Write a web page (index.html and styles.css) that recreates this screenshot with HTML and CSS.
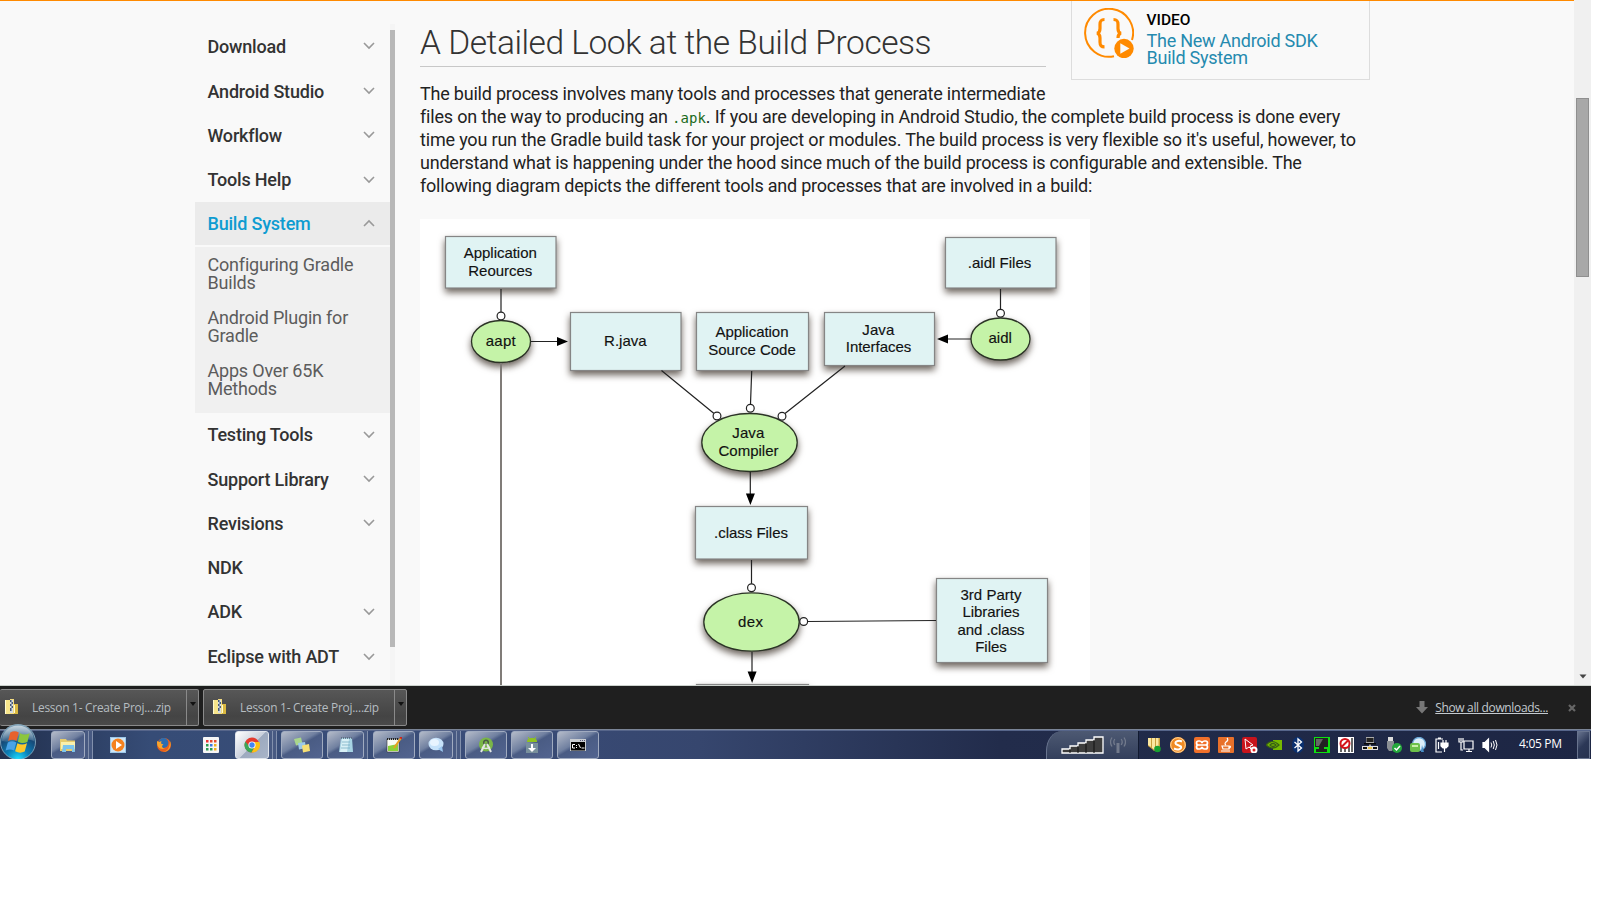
FILE: index.html
```html
<!DOCTYPE html>
<html lang="en">
<head>
<meta charset="utf-8">
<title>Build System Overview</title>
<link rel="stylesheet" href="styles.css">
</head>
<body>
<div class="screen">
  <div class="browser">
    <nav class="side">
      <ul class="menu">
        <li class="item first">Download<svg class="chev" viewBox="0 0 12 8"><path d="M1 1l5 5 5-5"/></svg></li>
        <li class="item">Android Studio<svg class="chev" viewBox="0 0 12 8"><path d="M1 1l5 5 5-5"/></svg></li>
        <li class="item">Workflow<svg class="chev" viewBox="0 0 12 8"><path d="M1 1l5 5 5-5"/></svg></li>
        <li class="item">Tools Help<svg class="chev" viewBox="0 0 12 8"><path d="M1 1l5 5 5-5"/></svg></li>
        <li class="item active">Build System<svg class="chev" viewBox="0 0 12 8"><path d="M1 7l5-5 5 5"/></svg></li>
        <li class="submenu">
          <a>Configuring Gradle<br>Builds</a>
          <a>Android Plugin for<br>Gradle</a>
          <a>Apps Over 65K<br>Methods</a>
        </li>
        <li class="item">Testing Tools<svg class="chev" viewBox="0 0 12 8"><path d="M1 1l5 5 5-5"/></svg></li>
        <li class="item">Support Library<svg class="chev" viewBox="0 0 12 8"><path d="M1 1l5 5 5-5"/></svg></li>
        <li class="item">Revisions<svg class="chev" viewBox="0 0 12 8"><path d="M1 1l5 5 5-5"/></svg></li>
        <li class="item">NDK</li>
        <li class="item">ADK<svg class="chev" viewBox="0 0 12 8"><path d="M1 1l5 5 5-5"/></svg></li>
        <li class="item last">Eclipse with ADT<svg class="chev" viewBox="0 0 12 8"><path d="M1 1l5 5 5-5"/></svg></li>
      </ul>
      <div class="side-track"><div class="side-thumb"></div></div>
    </nav>
    <main class="content">
      <div class="top">
        <h1>A Detailed Look at the Build Process</h1>
        <aside class="video">
          <svg class="video-icon" viewBox="0 0 50 50" fill="none" stroke="#ff8a00">
            <path d="M30 48.300A24 24 0 1 1 48 32" stroke-width="2"/>
            <path d="M20.500 11.500c-4 0-4.500 2-4.500 5v4c0 2.500-.7 4.200-3 4.700 2.300.5 3 2.200 3 4.700v4c0 3 .5 5 4.500 5M29.500 11.500c4 0 4.500 2 4.500 5v4c0 2.500.7 4.200 3 4.700-2.300.5-3 2.200-3 4.700" stroke-width="3.200"/>
            <circle cx="40" cy="40.500" r="9.700" fill="#ff8a00" stroke="none"/>
            <path d="M36.300 35.300l9.200 5.200-9.200 5.200z" fill="#f9f9f9" stroke="none"/>
          </svg>
          <div class="video-text"><b>VIDEO</b><a>The New Android SDK<br>Build System</a></div>
        </aside>
      </div>
      <p class="para"><span class="l1">The build process involves many tools and processes that generate intermediate</span><br><span class="l2">files on the way to producing an <code>.apk</code>. If you are developing in Android Studio, the complete build process is done every</span><br><span class="l3">time you run the Gradle build task for your project or modules. The build process is very flexible so it's useful, however, to</span><br><span class="l4">understand what is happening under the hood since much of the build process is configurable and extensible. The</span><br><span class="l5">following diagram depicts the different tools and processes that are involved in a build:</span></p>
      <svg class="diagram" viewBox="420 219 670 466">
        <defs>
          <filter id="sh" x="-20%" y="-30%" width="140%" height="180%" color-interpolation-filters="sRGB"><feDropShadow dx="0" dy="4" stdDeviation="3.500" flood-color="#3c3228" flood-opacity=".75"/></filter>
        </defs>
        <rect x="420" y="219" width="670" height="466" fill="#fff"/>
        <g class="box" filter="url(#sh)">
          <rect x="445.500" y="236.500" width="110.500" height="51.500"/>
          <rect x="570.500" y="312.500" width="110.500" height="58"/>
          <rect x="696.500" y="312.500" width="112" height="58"/>
          <rect x="824.500" y="312.500" width="110" height="53"/>
          <rect x="945.500" y="237.500" width="110.500" height="50.500"/>
          <rect x="695.500" y="506.500" width="112" height="52.500"/>
          <rect x="936.500" y="578.500" width="111" height="84"/>
          <rect x="696.500" y="684.500" width="112" height="50"/>
        </g>
        <g class="oval" filter="url(#sh)">
          <ellipse cx="501" cy="341.500" rx="29.500" ry="21"/>
          <ellipse cx="1000.500" cy="339" rx="29.500" ry="21"/>
          <ellipse cx="749.500" cy="442.500" rx="47.700" ry="29"/>
          <ellipse cx="751.500" cy="622" rx="47.700" ry="29.200"/>
        </g>
        <path class="trunk" d="M501 363V685"/>
        <path class="wire" d="M501 289v23M1000.500 289v20M531 341.500h28M971 339h-25M661.500 370.500l52.500 43M751.700 371l-1.200 33M845 366l-60 47.500M750.300 472v24M751.500 560v24M808 621.500l128-1M752 652v22"/>
        <path d="M557 337l11 4.500-11 4.500zM948 334.500l-11 4.500 11 4.500zM745.900 493.500h9l-4.500 11.500zM747.600 671.500h9l-4.500 11.500z"/>
        <g class="dot">
          <circle cx="501" cy="316" r="3.900"/><circle cx="1000.500" cy="313.300" r="3.900"/>
          <circle cx="717" cy="416" r="3.900"/><circle cx="750.300" cy="408.300" r="3.900"/><circle cx="782" cy="416.300" r="3.900"/>
          <circle cx="751.500" cy="587.700" r="3.900"/><circle cx="803.700" cy="621.500" r="3.900"/>
        </g>
        <g class="label">
          <text x="500.300" y="258.300" textLength="73">Application</text><text x="500.300" y="275.800" textLength="64">Reources</text>
          <text x="500.700" y="346" textLength="30">aapt</text>
          <text x="625.300" y="346" textLength="42.500">R.java</text>
          <text x="752" y="337" textLength="73">Application</text><text x="752" y="354.500" textLength="87.500">Source Code</text>
          <text x="878.300" y="334.700" textLength="32">Java</text><text x="878.500" y="352" textLength="65.500">Interfaces</text>
          <text x="999.500" y="268" textLength="63.500">.aidl Files</text>
          <text x="1000.200" y="343.300" textLength="23.500">aidl</text>
          <text x="748.300" y="438.300" textLength="32">Java</text><text x="748.500" y="455.700" textLength="60">Compiler</text>
          <text x="751" y="538" textLength="74">.class Files</text>
          <text x="750.500" y="627" textLength="25">dex</text>
          <text x="991" y="599.700" textLength="61">3rd Party</text><text x="991" y="617.200" textLength="57">Libraries</text><text x="991" y="634.500" textLength="67">and .class</text><text x="991" y="651.900" textLength="31.500">Files</text>
        </g>
      </svg>
    </main>
    <div class="scrollbar"><div class="thumb"></div><svg class="sb-arrow" viewBox="0 0 8 5"><path d="M.5.5h7L4 4.500z" fill="#444"/></svg></div>
  </div>

  <div class="downloads">
    <div class="dl first"><svg class="zip" viewBox="0 0 15 16"><path d="M1 1h5v14H1z" fill="#f7e58a"/><path d="M9 5h5v10H9z" fill="#d9b840"/><path d="M10 6h1v8h-1zM1 1h1v14H1z" fill="#fffbd0"/><path d="M6 0h4v15H6z" fill="#f3dc80"/><path d="M6 1h3v13H6z" fill="#d4dae2"/><path d="M6 1h1.500v2H6zM7.500 3H9v2H7.500zM6 5h1.500v2H6zM7.500 7H9v2H7.500zM6 9h1.500v3H6z" fill="#42597a"/></svg><span class="dl-name">Lesson 1- Create Proj....zip</span><span class="drop"><svg viewBox="0 0 6 4"><path d="M0 0h6L3 4z" fill="#111"/></svg></span></div>
    <div class="dl second"><svg class="zip" viewBox="0 0 15 16"><path d="M1 1h5v14H1z" fill="#f7e58a"/><path d="M9 5h5v10H9z" fill="#d9b840"/><path d="M10 6h1v8h-1zM1 1h1v14H1z" fill="#fffbd0"/><path d="M6 0h4v15H6z" fill="#f3dc80"/><path d="M6 1h3v13H6z" fill="#d4dae2"/><path d="M6 1h1.500v2H6zM7.500 3H9v2H7.500zM6 5h1.500v2H6zM7.500 7H9v2H7.500zM6 9h1.500v3H6z" fill="#42597a"/></svg><span class="dl-name">Lesson 1- Create Proj....zip</span><span class="drop"><svg viewBox="0 0 6 4"><path d="M0 0h6L3 4z" fill="#111"/></svg></span></div>
    <svg class="dl-arrow" viewBox="0 0 12 13"><path d="M3.500 0h5v6H12l-6 6.500L0 6h3.500z" fill="#777"/></svg>
    <a class="show-all">Show all downloads...</a>
    <svg class="dl-close" viewBox="0 0 8 8"><path d="M1 1l6 6M7 1L1 7" stroke="#666" stroke-width="2.200"/></svg>
  </div>

  <div class="taskbar">
    <svg class="start" viewBox="0 0 36 36">
      <defs>
        <radialGradient id="orb" cx=".5" cy="1" r=".95"><stop offset="0" stop-color="#1fe0ff"/><stop offset=".35" stop-color="#0b7fb8"/><stop offset=".7" stop-color="#174a78"/><stop offset="1" stop-color="#6d93ac"/></radialGradient>
        <linearGradient id="gloss" x1="0" y1="0" x2="0" y2="1"><stop offset="0" stop-color="#fff" stop-opacity=".6"/><stop offset="1" stop-color="#fff" stop-opacity=".12"/></linearGradient>
      </defs>
      <circle cx="18" cy="18" r="17.500" fill="url(#orb)" stroke="#8fb4c8" stroke-width=".8"/>
      <path d="M2 17C2 8 9 1.500 18 1.500S34 8 34 17c-9-4-22 3-32 0z" fill="url(#gloss)"/>
      <path d="M10.300 8.500c3-1.600 5.500-1.600 8.500 0l-2.200 8.500c-3-1.600-5.500-1.400-8.500 0z" fill="#e8622c"/>
      <path d="M20 9.300c3.400 1.700 6.200 1.600 9.700 0l-2.300 8.700c-3.600 1.600-6.200 1.400-9.600-.3z" fill="#8cc63c"/>
      <path d="M7.800 18.400c3-1.600 5.500-1.600 8.500 0l-2.200 8.200c-3-1.600-5.500-1.500-8.500 0z" fill="#4aa3e8"/>
      <path d="M17.400 19.200c3.400 1.700 6.100 1.600 9.600 0l-2.300 8.300c-3.400 1.600-6.200 1.500-9.600-.3z" fill="#fcc82c"/>
    </svg>
    <div class="apps">
      <span class="tb w34"><svg viewBox="0 0 16 16"><path d="M0 2h6l1 1.500h8V14H0z" fill="#e6cc6c"/><path d="M1 5h14v7H1z" fill="#faf0ac"/><path d="M3 8h11l1 7h-3v-3H6v3H2z" fill="#7cc4ec"/></svg></span><i class="stack"></i><i class="stack"></i>
      <span class="pin p1"><svg viewBox="0 0 16 16"><path d="M0 0h16v16H0z" fill="#9cc8ea"/><path d="M1 1h14v14H1z" fill="#cfe6f6"/><circle cx="8" cy="8" r="6.500" fill="#f5821f"/><path d="M6 4l6 4-6 4z" fill="#fff"/></svg></span>
      <span class="pin p2"><svg viewBox="0 0 16 16"><circle cx="8" cy="8" r="7" fill="#e8601c"/><circle cx="7.500" cy="6" r="4.900" fill="#2c6db0"/><path d="M1 4c-.5 7 4 9 8 7.500C6 11 5 9 7.500 7.500L5 6.500 5.500 4 3 5zM14 4c2 5-1 11-7 11 5-1 7-5 7-11z" fill="#f9a52c"/></svg></span>
      <span class="pin p3"><svg viewBox="0 0 16 16"><rect width="16" height="16" rx="1" fill="#f6f6f6"/><path d="M3 3h2.500v2.500H3z" fill="#e33"/><path d="M7 3h2.500v2.500H7zM11 3h2.500v2.500H11z" fill="#e34b30"/><path d="M3 7h2.500v2.500H3z" fill="#2a9a50"/><path d="M7 7h2.500v2.500H7z" fill="#3a78e0"/><path d="M11 7h2.500v2.500H11z" fill="#f0b020"/><path d="M3 11h2.500v2.500H3zM7 11h2.500v2.500H7z" fill="#2a9a50"/><path d="M11 11h2.500v2.500H11z" fill="#f0b020"/></svg></span>
      <span class="tb w34 lit"><svg viewBox="0 0 16 16"><circle cx="8" cy="8" r="7.500" fill="#e33b2e"/><path d="M1.300 4.500A7.500 7.500 0 0 0 7.500 15.500L10.500 10 5 9z" fill="#3aa757"/><path d="M15.300 5A7.500 7.500 0 0 1 7.500 15.500L11 9.500 9.500 5z" fill="#fbc116"/><circle cx="8" cy="8" r="3.600" fill="#fff"/><circle cx="8" cy="8" r="2.700" fill="#4285f4"/></svg></span><i class="stack"></i><i class="stack"></i>
      <span class="tb w42 m4"><svg viewBox="0 0 16 16"><path d="M0 2l7-1.500L8.500 7 2 8.500z" fill="#a9d68c"/><path d="M4 6l7-1 1 6-7 1.500z" fill="#9cc9e8"/><path d="M8 8.500l7-1.500 1 7-7 1.500z" fill="#f6df74"/></svg></span>
      <span class="tb w37 m4"><svg viewBox="0 0 16 16"><path d="M3 1h11l1 14H1z" fill="#a8d4e4"/><path d="M4 2h7L9 15H2z" fill="#d8f0f6"/><path d="M3 1h11" stroke="#567" stroke-width="1.500" stroke-dasharray="1 1"/><path d="M4 5h8M4 8h8M3 11h9" stroke="#6fa7bd" stroke-width=".7"/></svg></span><i class="stack"></i>
      <span class="tb w42 m5"><svg viewBox="0 0 16 16"><path d="M1 2h12v13H1z" fill="#f8fbf4" stroke="#333" stroke-width=".6"/><path d="M2 9l10-2v7H2z" fill="#8bd138"/><path d="M1 2h12" stroke="#222" stroke-width="2" stroke-dasharray="1 1"/><path d="M15 1L8 11" stroke="#e8a020" stroke-width="2"/><path d="M14 0l2 1.500" stroke="#c22" stroke-width="2"/></svg></span>
      <span class="tb w34 m4"><svg viewBox="0 0 16 16"><ellipse cx="8" cy="7" rx="7.500" ry="6.300" fill="#c6e2fa"/><path d="M10 12l5 3-1-6z" fill="#9cc8f0"/><ellipse cx="6.500" cy="5.500" rx="4.500" ry="3.500" fill="#e8f4ff"/></svg></span><i class="stack"></i><i class="stack"></i>
      <span class="tb w42 m4"><svg viewBox="0 0 16 16"><circle cx="8" cy="7.500" r="7" fill="#7ab648"/><circle cx="8" cy="5.500" r="2.300" fill="none" stroke="#4a5a48" stroke-width="1.500"/><path d="M7 7L3 15M9 7l4 8" stroke="#e4e8e4" stroke-width="2"/><path d="M4 10q4 3 8 0" stroke="#e4e8e4" stroke-width="1.500" fill="none"/></svg></span>
      <span class="tb w42 m4"><svg viewBox="0 0 16 16"><path d="M3 5c0-3 2-4 5-4s5 1 5 4z" fill="#8fc31f"/><path d="M4 0l1.500 2M12 0l-1.500 2" stroke="#8fc31f"/><path d="M2 6h12v10H2z" fill="#78909c"/><path d="M7 7h2v4h3l-4 4-4-4h3z" fill="#fff"/></svg></span>
      <span class="tb w42 m4"><svg viewBox="0 0 16 16"><path d="M0 2h16v12H0z" fill="#c8ccd0"/><path d="M1 5h14v8.500H1z" fill="#000"/><path d="M10 3.500h5" stroke="#557" stroke-dasharray="1 1"/><path d="M5 7.500H2.500v3.500H5M6.500 8v1M6.500 10v1M8.500 7l2 4M11.500 11h3" stroke="#fff" fill="none" stroke-width="1"/></svg></span>
    </div>
    <div class="signal">
      <svg class="bars" viewBox="0 0 43 18"><path d="M1 17v-4h8v-3h8V7h8V4h8V1h9v16z" fill="#3d3d3d" stroke="#fff" stroke-width="1.300"/><path d="M9 13v4M17 10v7M25 7v10M33 4v13" stroke="#111" stroke-width="1"/></svg>
      <svg class="antenna" viewBox="0 0 16 18" fill="none" stroke="#727a8c" stroke-width="1.300"><path d="M8 7v10" stroke-width="3"/><path d="M4.800 3q-2 3 0 6M11.200 3q2 3 0 6M2 1.500q-3 4.500 0 9M14 1.500q3 4.500 0 9"/></svg>
    </div>
    <div class="tray">
      <span><svg viewBox="0 0 16 16"><path d="M2 1h12v9l-3 3-3 1-2-2-4-3z" fill="#c99f3c"/><path d="M2 1h3v9L2 8zM6 1h3v12l-3-2zM10 1h2.500v10H10z" fill="#fbe7a0"/><circle cx="11.500" cy="12" r="3.300" fill="#18a030"/></svg></span>
      <span><svg viewBox="0 0 16 16"><circle cx="8" cy="8" r="8" fill="#f08a24"/><circle cx="8" cy="8" r="7.300" fill="none" stroke="#ffd9a0"/><path d="M12 4.500C8 2.500 4 5 6 7.200l5 2.300C12 12 8 13.500 4 11.500" stroke="#fff" stroke-width="2" fill="none"/></svg></span>
      <span><svg viewBox="0 0 16 16"><rect width="16" height="16" rx="2" fill="#f0702a"/><path d="M6.500 8H4.500a1.500 1.500 0 0 1 0-4h1q2 0 2.500 2 .5-2 2.500-2h1a1.500 1.500 0 0 1 0 4h-2 2a1.500 1.500 0 0 1 0 4h-1Q8.500 12 8 10q-.5 2-2.500 2h-1a1.500 1.500 0 0 1 0-4h7" fill="none" stroke="#fff" stroke-width="1.700"/></svg></span>
      <span><svg viewBox="0 0 16 16"><rect width="16" height="16" rx="1" fill="#e8702a"/><path d="M9 1q2 2-1 4-2 2 0 3M4 9h7v3H5zM11 9q3 0 0 2.500M3 14h9" stroke="#fff" fill="none" stroke-width="1.200"/></svg></span>
      <span><svg viewBox="0 0 16 16"><rect width="15" height="16" rx="2" fill="#c8141c"/><path d="M3 2l8 6-3 1 2 4-3-3-3 2z" fill="none" stroke="#fff"/><circle cx="12" cy="13" r="3.500" fill="#fff"/><circle cx="12" cy="13" r="1.500" fill="#d22"/></svg></span>
      <span><svg viewBox="0 0 16 16"><path d="M7 3h9v10H7z" fill="#76b900"/><path d="M0 8q6-7 13 0-6 6-13 0zM4 8q3-3 6 0-3 3-6 0z" stroke="#375f14" fill="#76b900" stroke-width="1.200"/></svg></span>
      <span><svg viewBox="0 0 16 16"><ellipse cx="8" cy="8" rx="6" ry="8" fill="#0a3070"/><path d="M4.500 5l7 6L8 14V2l3.500 3-7 6" fill="none" stroke="#fff" stroke-width="1.300"/></svg></span>
      <span><svg viewBox="0 0 16 16"><path d="M0 0h16v16H0z" fill="#0ee010"/><path d="M1 1h13v9H1zM5 10h5v2H5zM2 12h11v3H2z" fill="#222"/><path d="M2 2h7L5 9H2z" fill="#666"/></svg></span>
      <span><svg viewBox="0 0 16 16"><path d="M0 0h16v16H0z" fill="#fff"/><path d="M3 15V8M7 15V6M11 15V4M14 15V1" stroke="#555" stroke-width="1.800"/><circle cx="7" cy="6.500" r="4.500" fill="#fff" stroke="#d4141c" stroke-width="2"/><path d="M3.500 10l7-7" stroke="#d4141c" stroke-width="2"/></svg></span>
      <span><svg viewBox="0 0 16 16"><path d="M4 0h8v6H4zM7 6h2v4H7z" fill="#aaa"/><path d="M4.500 1h7v4h-7z" fill="#222"/><path d="M2 6h12v1.500H2z" fill="#050505"/><path d="M0 9h16v4H0z" fill="#ddd"/><path d="M1 10h4v2H1zM11 10h4v2h-4z" fill="#111"/><path d="M6 10h4v2H6z" fill="#e6c040"/></svg></span>
      <span><svg viewBox="0 0 16 16"><path d="M2 0h5v4H2z" fill="#ddd"/><path d="M1 4h7v7l-2 3H3l-2-3z" fill="#8a8f94"/><circle cx="11" cy="11" r="5" fill="#25a83c"/><path d="M8.500 11l2 2 3.500-4" stroke="#fff" stroke-width="1.500" fill="none"/></svg></span>
      <span><svg viewBox="0 0 16 16"><circle cx="9" cy="7" r="6.500" fill="#dceefa" stroke="#6ca8d8" stroke-width="1.300"/><path d="M12 8l2 7h-3z" fill="#4a90c8"/><rect y="6" width="10" height="9" rx="2" fill="#6cc04a"/><path d="M2 8h6v2H2z" fill="#c8f0a8"/></svg></span>
      <span><svg viewBox="0 0 16 16" fill="none" stroke="#fff" stroke-width="1.200"><path d="M9 2H2v13h6M4 1h3M4.500 5v7"/><path d="M7 6h7v3l-2 2H9L7 9zM9 3v3M12 3v3M10.500 11v4" fill="#fff"/></svg></span>
      <span><svg viewBox="0 0 16 16" fill="none" stroke="#fff" stroke-width="1.200"><path d="M6 4h9v8H6zM8 14.500h6M11 12v2"/><path d="M1 1v4h4V1M3 1v3M3 5v8h2"/></svg></span>
      <span><svg viewBox="0 0 16 16" fill="none" stroke="#fff" stroke-width="1.200"><path d="M1 5.500h2L6.500 2v12L3 10.500H1z" fill="#fff"/><path d="M9 5.500q1.500 2.500 0 5M11.200 4q2.300 4 0 8M13.500 3q3 5 0 10" stroke-width="1"/></svg></span>
    </div>
    <span class="clock">4:05 PM</span>
    <span class="desk"></span>
  </div>
</div>
</body>
</html>
```
FILE: styles.css
```css
* { box-sizing: border-box; }
body { margin: 0; background: #fff; font-family: Roboto, sans-serif; overflow: hidden; }
.screen { width: 1591px; height: 759px; display: flex; flex-direction: column; }

/* Documentation page */
.browser { height: 686px; flex: none; display: flex; background: #f9f9f9; overflow: hidden; border-bottom: 1px solid #ccd2cd; background-image: linear-gradient(#ff8a00, #ff8a00); background-size: 1574px 1px; background-repeat: no-repeat; }
.side { width: 200px; margin-left: 195px; padding-top: 24px; display: flex; flex: none; }
.menu { list-style: none; margin: 0; padding: 0; width: 195px; }
.item { height: 44.200px; padding: 0 15px 0 12.500px; display: flex; align-items: center; justify-content: space-between; font-size: 18px; font-weight: 500; letter-spacing: -.2px; color: #333; white-space: nowrap; }
.item.first { height: 45.200px; padding-bottom: 1px; }
.item.last { height: 45.800px; }
.item.active { height: 43px; background: #ebebeb; color: #0e9cd1; }
.chev { width: 12px; height: 8px; fill: none; stroke: #999; stroke-width: 1.600; }
.submenu { margin-top: 2px; height: 166px; background: #f0f0f0; padding: 9px 0 0 12.500px; font-size: 18px; line-height: 18px; letter-spacing: -.2px; color: #5c5c5c; }
.submenu a { display: block; margin-bottom: 17.300px; white-space: nowrap; }
.side-track { width: 5px; background: #f5f5f5; height: 661px; }
.side-thumb { margin-top: 6px; height: 617px; background: #b8b8b8; }
.content { margin-left: 25px; width: 950px; flex: none; }
.top { display: flex; justify-content: space-between; height: 79px; }
h1 { margin: 0; width: 626px; height: 67px; padding-top: 22px; border-bottom: 1px solid #c8c8c8; font-size: 33.500px; line-height: 42px; font-weight: 300; letter-spacing: -.45px; color: #333; white-space: nowrap; }
.video { width: 299px; height: 79px; border: 1px solid #ddd; border-top: 0; display: flex; margin-top: 1px; padding: 7px 0 0 12px; }
.video-icon { width: 50px; height: 50px; margin-right: 12.500px; }
.video-text { font-size: 18px; line-height: 17px; letter-spacing: -.25px; color: #258aaf; white-space: nowrap; }
.video-text b { display: block; font-size: 15.500px; font-weight: 500; letter-spacing: 0; color: #000; line-height: 18px; margin: 3px 0 3px; }
.para { margin: 3px 0 0; font-size: 18px; line-height: 23px; color: #222; white-space: nowrap; }
.para code { font-family: "DejaVu Sans Mono", monospace; font-size: 14px; letter-spacing: 0; color: #1b6b1b; line-height: 1; }
.l1 { letter-spacing: -.21px; } .l2 { letter-spacing: -.188px; } .l3 { letter-spacing: -.182px; } .l4 { letter-spacing: -.225px; } .l5 { letter-spacing: -.218px; }
.diagram { display: block; width: 670px; height: 466px; margin-top: 22px; }
.box rect { fill: #e0f3f3; stroke: #858585; stroke-width: 1.200; }
.oval ellipse { fill: #c5f3a8; stroke: #2b3326; stroke-width: 1.300; }
.wire { stroke: #222; stroke-width: 1.200; fill: none; }
.trunk { stroke: #807c78; stroke-width: 2; }
.dot circle { fill: #fff; stroke: #222; stroke-width: 1.200; }
.label text { font-family: "Liberation Sans", Arial, sans-serif; font-size: 15px; text-anchor: middle; fill: #111; stroke: #111; stroke-width: .15; }
.scrollbar { width: 17px; height: 685px; margin-left: auto; background: #f0f0f0; display: flex; flex-direction: column; align-items: center; padding: 98px 0 6px; }
.thumb { width: 13px; height: 179px; background: #a8a8a8; border: 1px solid #8f8f8f; }
.sb-arrow { width: 8px; height: 5px; margin-top: auto; }

/* Download shelf */
.downloads { height: 43px; flex: none; background: #1f1f1f; display: flex; align-items: center; font-family: "Open Sans", "Noto Sans", sans-serif; font-size: 12px; }
.dl { height: 37px; margin-right: 4px; display: flex; align-items: center; border: 1px solid #8a8a8a; border-radius: 2px; background: linear-gradient(#575757, #444 75%, #4a4a4a); color: #b6bdc1; }
.dl.first { width: 199px; border-left: 0; padding-left: 4px; }
.dl.second { width: 204px; padding-left: 8px; }
.zip { width: 15px; height: 16px; margin: 0 13px 2px 0; }
.dl-name { white-space: nowrap; font-size: 11.900px; letter-spacing: -.24px; padding-bottom: 1px; }
.drop { margin-left: auto; width: 12px; height: 35px; border-left: 1px solid #8a8a8a; display: flex; align-items: flex-start; justify-content: center; padding-top: 12px; }
.drop svg { width: 6px; height: 4px; }
.dl-arrow { width: 12px; height: 13px; margin-left: auto; margin-right: 7px; }
.show-all { color: #c3cacf; text-decoration: underline; white-space: nowrap; font-size: 12px; letter-spacing: -.35px; }
.dl-close { width: 8px; height: 8px; margin: 0 15px 0 20px; }

/* Taskbar */
.taskbar { height: 30px; flex: none; display: flex; align-items: flex-end; border-top: 1px solid #7a8496; box-shadow: inset 0 1px #56658a; background: linear-gradient(90deg, #22304e, #364c76 150px, #3a4d79 450px, #36466e 700px, #222c4b 1000px, #1d2644); }
.start { width: 36px; height: 36px; flex: none; margin-bottom: -1px; }
.apps { display: flex; align-items: center; height: 29px; margin-left: 15px; }
.apps svg { width: 16px; height: 16px; }
.tb { height: 28px; display: flex; align-items: center; justify-content: center; border: 1px solid #a0abc0; border-radius: 3px; background: linear-gradient(150deg, #b4bbc9 0, #7080a0 42%, #4a5c84 50%, #526490 100%); }
.tb.lit { background: linear-gradient(135deg, #fff, #c9d0dc 50%, #9daabf 52%, #a8b4c8); border-color: #dfe4ec; }
.w34 { width: 34px; } .w37 { width: 37px; } .w42 { width: 42px; }
.m4 { margin-left: 4px; } .m5 { margin-left: 5px; }
.stack { width: 4px; height: 28px; border-right: 1px solid #8290ac; background: #485a82; }
.pin { display: flex; width: 16px; }
.p1 { margin-left: 17px; } .p2 { margin-left: 30px; } .p3 { margin: 0 16px 0 31px; }
.signal { margin-left: auto; width: 93px; height: 28px; border-left: 1px solid #6a7690; border-top-left-radius: 16px 20px; border-right: 1px solid #111a30; background: linear-gradient(#4d5972, #333f5c); display: flex; align-items: center; padding-left: 14px; }
.bars { width: 43px; height: 18px; }
.antenna { width: 16px; height: 18px; margin-left: 6px; }
.tray { display: flex; width: 360px; height: 29px; align-items: center; margin-left: 3px; }
.tray span { width: 24px; display: flex; justify-content: center; }
.tray svg { width: 16px; height: 16px; }
.clock { width: 43px; margin-left: 17px; height: 29px; line-height: 28px; color: #fff; font-family: "Open Sans", "Noto Sans", sans-serif; font-size: 12px; white-space: nowrap; letter-spacing: -.3px; }
.desk { width: 13px; height: 28px; margin: 0 1px 0 15px; border: 1px solid #68748e; background: linear-gradient(135deg, #67738e, #2c3857 50%, #27324f); }
```
